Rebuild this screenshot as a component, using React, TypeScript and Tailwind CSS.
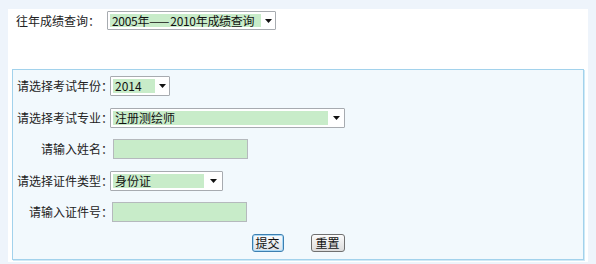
import React from 'react';

const font = { fontFamily: '"Noto Sans CJK SC", "Noto Sans", sans-serif' };

function Arrow() {
  return (
    <svg width="7" height="4" viewBox="0 0 7 4" className="shrink-0">
      <path d="M0 0H7L3.5 4Z" fill="#111" />
    </svg>
  );
}

interface FakeSelectProps {
  value: React.ReactNode;
  width: string;
  fill: string;
  height?: string;
}

function FakeSelect({ value, width, fill, height = 'h-5' }: FakeSelectProps) {
  return (
    <div className={`${width} ${height} flex items-center border border-[#a7abb0] bg-white pl-[2px] rounded-[1px]`}>
      <div className={`${fill} h-[calc(100%-4px)] bg-[#c8ecc9] flex items-center pl-[2px] text-[12px] leading-none text-[#111] whitespace-nowrap shrink-0`}>
        {value}
      </div>
      <div className="flex-1 flex justify-center">
        <Arrow />
      </div>
    </div>
  );
}

function Field({ width }: { width: string }) {
  return <div className={`${width} h-5 border border-[#b5b9bd] bg-[#c8ecc9]`} />;
}

function Row({ label, children, shift }: { label: string; children: React.ReactNode; shift: string }) {
  return (
    <div className="flex items-center h-5">
      <span className="w-[100px] text-right text-[12px] leading-none text-[#222] whitespace-nowrap shrink-0">
        {label}
      </span>
      <div className={shift}>{children}</div>
    </div>
  );
}

export default function App() {
  return (
    <div className="w-[596px] h-[264px] bg-[#eef4fb] pt-[9px] px-[8px] overflow-hidden" style={font}>
      <div className="bg-white h-[253px] pt-[2px] px-[4px]">
        {/* history query */}
        <div className="flex items-center h-[19px] pl-[4px]">
          <span className="text-[12px] leading-none text-[#222] w-[91px] shrink-0">往年成绩查询：</span>
          <FakeSelect
            value={
              <span className="tracking-[-0.3px]">
                2005年<span className="tracking-[1px]">——</span>2010年成绩查询
              </span>
            }
            width="w-[169px]"
            fill="w-[151px]"
            height="h-[19px]"
          />
        </div>

        {/* query form */}
        <div className="mt-[39px] h-[191px] border border-[#a2d2ec] bg-[#f2f9fd] shadow-[1px_1px_0_#cfe9f6] pt-[6px] flex flex-col gap-[11.5px]">
          <Row label="请选择考试年份：" shift="-ml-[3px]">
            <FakeSelect value="2014" width="w-[60px]" fill="w-[42px]" />
          </Row>
          <Row label="请选择考试专业：" shift="-ml-[3px]">
            <FakeSelect value="注册测绘师" width="w-[235px]" fill="w-[215px]" />
          </Row>
          <Row label="请输入姓名：" shift="">
            <Field width="w-[135px]" />
          </Row>
          <Row label="请选择证件类型：" shift="-ml-[3px]">
            <FakeSelect value="身份证" width="w-[113px]" fill="w-[91px]" />
          </Row>
          <Row label="请输入证件号：" shift="-ml-[1px]">
            <Field width="w-[135px]" />
          </Row>
          <div className="flex justify-center gap-[27px] h-[18px]">
            <button className="w-[32px] h-[18px] rounded-[3px] border border-[#3c7fb1] bg-gradient-to-b from-[#fbfcfd] to-[#dfe3e8] shadow-[inset_0_0_0_1px_#a9d8f5] text-[12px] leading-none text-[#111]">
              提交
            </button>
            <button className="w-[34px] h-[18px] rounded-[3px] border border-[#707070] bg-gradient-to-b from-[#fbfbfb] to-[#dcdcdc] text-[12px] leading-none text-[#111]">
              重置
            </button>
          </div>
        </div>
      </div>
    </div>
  );
}
